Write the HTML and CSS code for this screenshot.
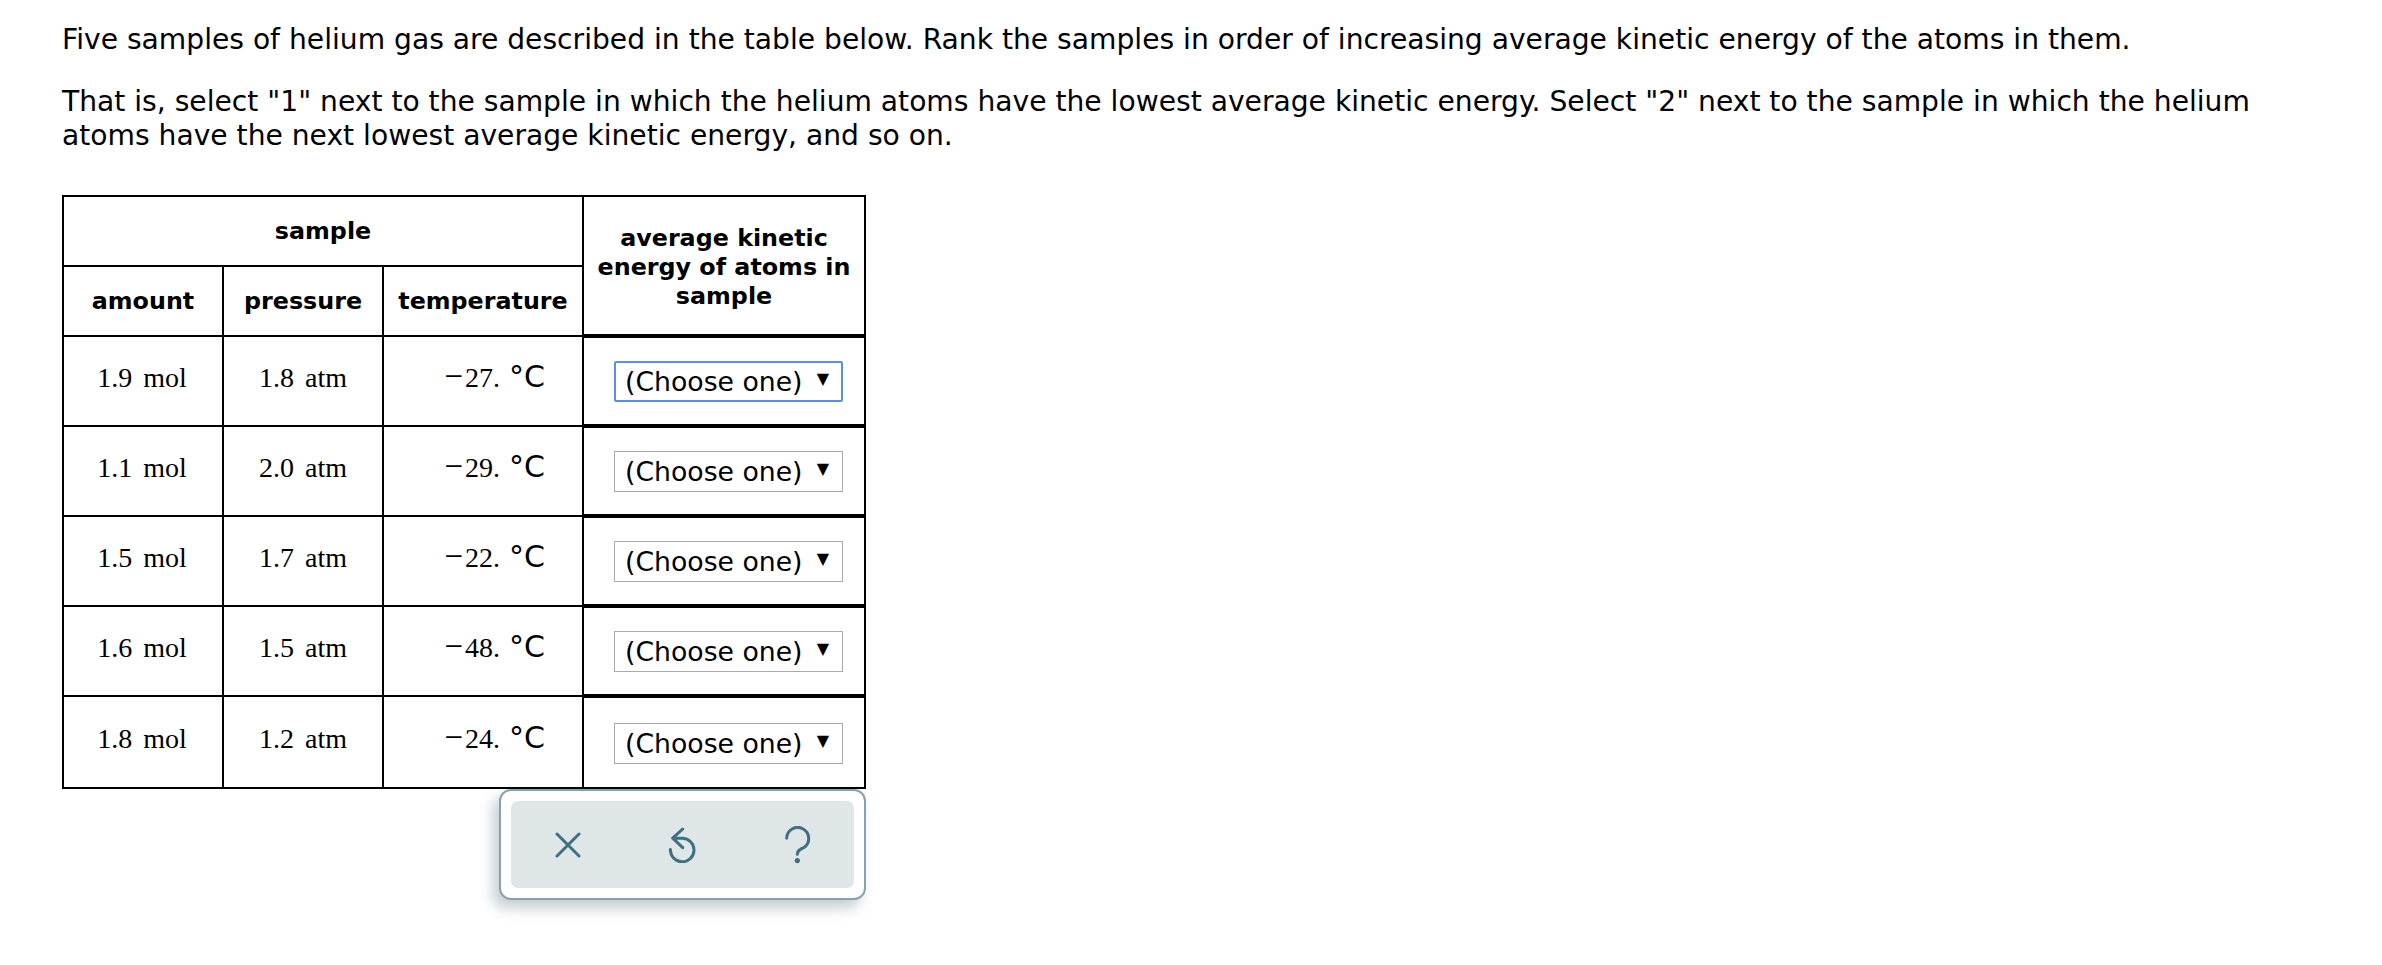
FILE: index.html
```html
<!DOCTYPE html>
<html lang="en">
  <head>
    <meta charset="UTF-8" />
    <title>Helium samples</title>
    <link rel="stylesheet" href="styles.css">
  </head>
  <body>
    <main class="main">
      <p class="prompt">Five samples of helium gas are described in the table below. Rank the samples in order of increasing average kinetic energy of the atoms in them.</p>
      <p class="prompt">That is, select "1" next to the sample in which the helium atoms have the lowest average kinetic energy. Select "2" next to the sample in which the helium atoms have the next lowest average kinetic energy, and so on.</p>
      <div class="question">
        <table class="samples">
          <colgroup>
            <col class="col-amount" />
            <col class="col-pressure" />
            <col class="col-temperature" />
            <col class="col-answer" />
          </colgroup>
          <thead>
            <tr>
              <th colspan="3">sample</th>
              <th rowspan="2" class="answer-head">average kinetic energy of atoms in sample</th>
            </tr>
            <tr>
              <th>amount</th>
              <th>pressure</th>
              <th>temperature</th>
            </tr>
          </thead>
          <tbody>
            <tr>
              <td>1.9 <span class="unit">mol</span></td>
              <td>1.8 <span class="unit">atm</span></td>
              <td class="temp"><span class="minus">−</span>27. <span class="deg">°C</span></td>
              <td class="answer"><span class="choose"><select class="focused"><option>(Choose one)</option></select><span class="arrow">▼</span></span></td>
            </tr>
            <tr>
              <td>1.1 <span class="unit">mol</span></td>
              <td>2.0 <span class="unit">atm</span></td>
              <td class="temp"><span class="minus">−</span>29. <span class="deg">°C</span></td>
              <td class="answer"><span class="choose"><select><option>(Choose one)</option></select><span class="arrow">▼</span></span></td>
            </tr>
            <tr>
              <td>1.5 <span class="unit">mol</span></td>
              <td>1.7 <span class="unit">atm</span></td>
              <td class="temp"><span class="minus">−</span>22. <span class="deg">°C</span></td>
              <td class="answer"><span class="choose"><select><option>(Choose one)</option></select><span class="arrow">▼</span></span></td>
            </tr>
            <tr>
              <td>1.6 <span class="unit">mol</span></td>
              <td>1.5 <span class="unit">atm</span></td>
              <td class="temp"><span class="minus">−</span>48. <span class="deg">°C</span></td>
              <td class="answer"><span class="choose"><select><option>(Choose one)</option></select><span class="arrow">▼</span></span></td>
            </tr>
            <tr class="last">
              <td>1.8 <span class="unit">mol</span></td>
              <td>1.2 <span class="unit">atm</span></td>
              <td class="temp"><span class="minus">−</span>24. <span class="deg">°C</span></td>
              <td class="answer"><span class="choose"><select><option>(Choose one)</option></select><span class="arrow">▼</span></span></td>
            </tr>
          </tbody>
        </table>
        <div class="toolbar">
          <div class="tools">
            <button class="tool" aria-label="Clear">
              <svg width="26" height="26" viewBox="0 0 26 26"><path d="M2 2 L24 24 M24 2 L2 24" /></svg>
            </button>
            <button class="tool" aria-label="Undo">
              <svg width="28" height="36" viewBox="0 0 28 36"><path d="M14.7 2 L4.7 11.2 L14.7 20.6 M4.7 11.2 H14.2 A11.8 11.8 0 1 1 2.4 22.5" /></svg>
            </button>
            <button class="tool" aria-label="Help">
              <svg width="28" height="38" viewBox="0 0 28 38"><path d="M3.7 12.3 A11 11 0 1 1 21 21.5 C17 23.5 14.3 24.5 14.3 28.3" /><circle class="dot" cx="14.3" cy="34.6" r="2.6" /></svg>
            </button>
          </div>
        </div>
      </div>
    </main>
  </body>
</html>
```
FILE: styles.css
```css
body {
  margin: 0;
  background-color: white;
  color: black;
  font-family: "DejaVu Sans", sans-serif;
}
.main {
  padding: 23px 0 50px 62px;
  width: 2260px;
}
.prompt {
  margin: 0 0 28px 0;
  font-size: 28.16px;
  line-height: 34px;
}
.question {
  display: flex;
  flex-flow: column nowrap;
  align-items: flex-end;
  width: 804px;
  margin-top: 42px;
}
.samples {
  border-collapse: collapse;
  table-layout: fixed;
  width: 804px;
  border: 2px solid black;
}
.col-amount,
.col-pressure {
  width: 160px;
}
.col-temperature {
  width: 200px;
}
.samples th,
.samples td {
  border: 2px solid black;
  padding: 0;
  text-align: center;
}
.samples th {
  height: 67px;
  padding-top: 1px;
  font-size: 23.8px;
  line-height: 29px;
  font-weight: bold;
}
.samples th.answer-head {
  padding: 3px 10px 0;
  border-bottom-width: 4px;
}
.samples td {
  height: 80px;
  padding-bottom: 6px;
  font-family: "Liberation Serif", serif;
  font-size: 28px;
}
.samples td:first-child {
  padding-right: 2px;
}
.unit {
  margin-left: 4px;
}
.samples td.temp {
  text-align: right;
  padding-right: 37px;
}
.minus {
  margin-right: 2px;
  font-size: 33px;
  line-height: 0;
}
.deg {
  font-family: "DejaVu Sans", sans-serif;
  font-size: 30px;
  line-height: 0;
  margin-left: 2px;
}
.samples td.answer {
  text-align: left;
  height: 86px;
  padding-bottom: 0;
  padding-left: 30px;
  border-bottom-width: 4px;
}
.samples .last td.answer {
  height: 88px;
  padding-top: 1px;
  border-bottom-width: 2px;
}
.choose {
  display: inline-block;
  position: relative;
  vertical-align: middle;
}
.choose select {
  display: block;
  appearance: none;
  width: 229px;
  height: 41px;
  padding: 0 0 0 10px;
  border: 1px solid #aaa;
  border-radius: 0;
  background-color: white;
  color: black;
  font-family: "DejaVu Sans", sans-serif;
  font-size: 26.7px;
}
.choose select.focused {
  border: 2px solid #5b8def;
  border-radius: 2px;
  padding-left: 9px;
}
.arrow {
  position: absolute;
  top: 8px;
  right: 14px;
  font-family: "DejaVu Sans", sans-serif;
  font-size: 16px;
  line-height: 20px;
  pointer-events: none;
}
.toolbar {
  width: 367px;
  height: 111px;
  box-sizing: border-box;
  padding: 10px;
  border: 2px solid #86a3ac;
  border-radius: 12px;
  background-color: white;
  box-shadow: -6px 8px 14px rgba(60, 90, 105, 0.3);
}
.tools {
  display: flex;
  height: 100%;
  border-radius: 7px;
  background-color: #dfe6e8;
}
.tool {
  flex: 1;
  display: grid;
  place-content: center;
  padding: 0;
  border: 0;
  background: none;
}
.tool svg {
  display: block;
  fill: none;
  stroke: #3f7082;
  stroke-width: 3;
  stroke-linecap: round;
  stroke-linejoin: round;
}
.tool .dot {
  fill: #3f7082;
  stroke: none;
}
```
